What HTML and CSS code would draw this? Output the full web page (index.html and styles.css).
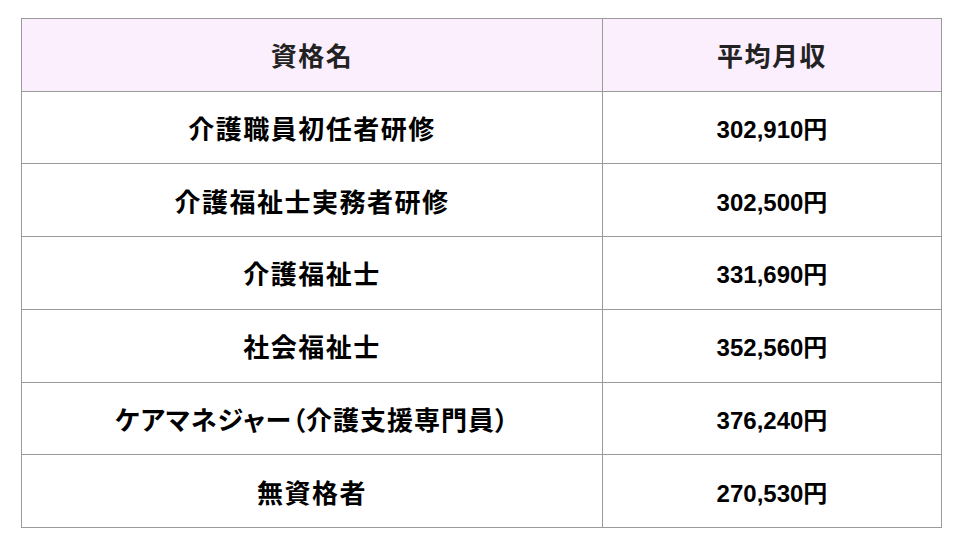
FILE: index.html
```html
<!DOCTYPE html>
<html lang="ja">
<head>
<meta charset="utf-8">
<title>資格別平均月収</title>
<link rel="stylesheet" href="styles.css">
</head>
<body>
<div class="salary-table">
  <div class="cell head">資格名</div>
  <div class="cell head">平均月収</div>
  <div class="cell name">介護職員初任者研修</div>
  <div class="cell amount">302,910円</div>
  <div class="cell name">介護福祉士実務者研修</div>
  <div class="cell amount">302,500円</div>
  <div class="cell name">介護福祉士</div>
  <div class="cell amount">331,690円</div>
  <div class="cell name">社会福祉士</div>
  <div class="cell amount">352,560円</div>
  <div class="cell name proportional">ケアマネジャー（介護支援専門員）</div>
  <div class="cell amount">376,240円</div>
  <div class="cell name">無資格者</div>
  <div class="cell amount">270,530円</div>
</div>
</body>
</html>
```
FILE: styles.css
```css
html, body {
  margin: 0;
  padding: 0;
  background: #ffffff;
}
body {
  padding: 18px 0 0 21px;
  font-family: "Liberation Sans", "Noto Sans CJK JP", sans-serif;
}
.salary-table {
  display: grid;
  grid-template-columns: 580px 338px;
  grid-template-rows: repeat(7, 1fr);
  gap: 1px;
  padding: 1px;
  width: 921px;
  height: 510px;
  box-sizing: border-box;
  background: #9a9a9a;
}
.cell {
  display: flex;
  align-items: center;
  justify-content: center;
  background: #ffffff;
  color: #000000;
  font-weight: bold;
  font-size: 26px;
  letter-spacing: 1.5px;
}
.head {
  background: #fbeefd;
  color: #222222;
}
.proportional {
  font-feature-settings: "palt" 1;
  letter-spacing: 1px;
}
.amount {
  font-size: 24px;
  letter-spacing: 0;
}
```
